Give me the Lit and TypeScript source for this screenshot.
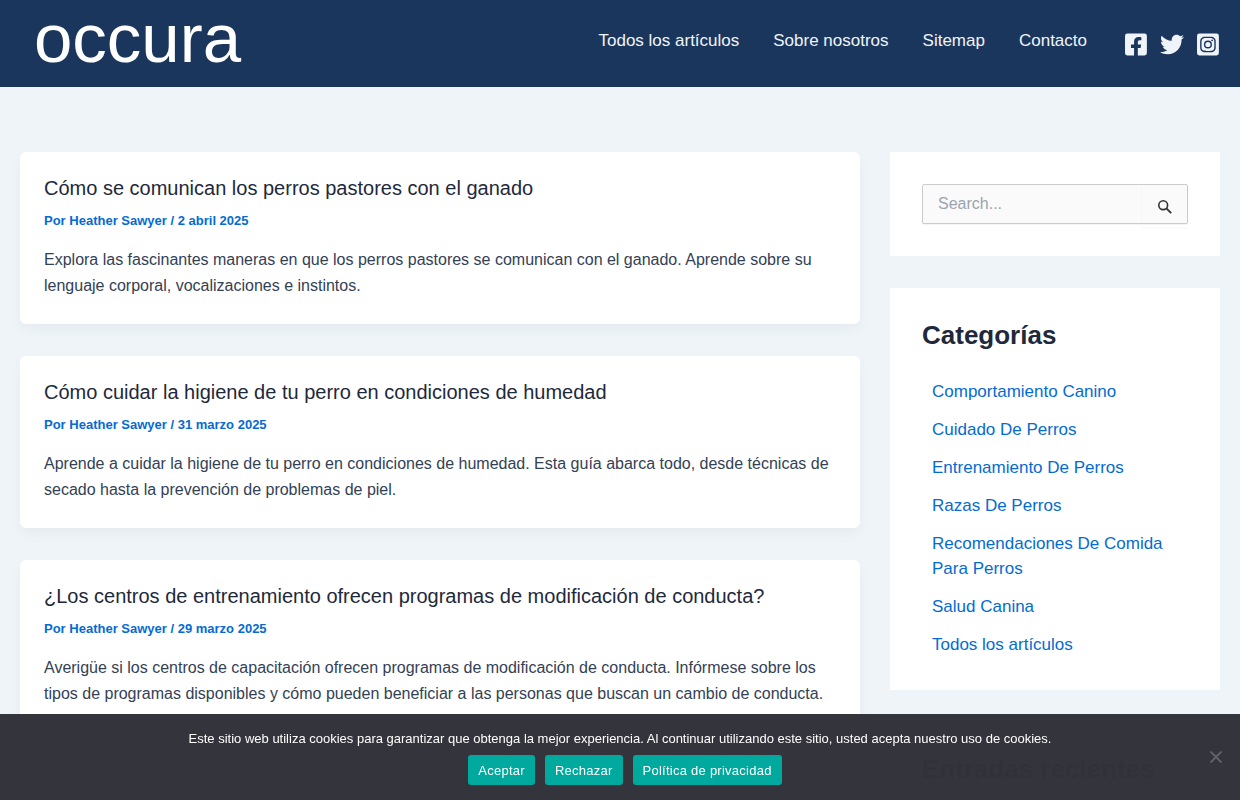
import { LitElement, html, css, svg } from "lit";
import { customElement } from "lit/decorators.js";

interface Post { title: string; date: string; excerpt: string; }

const MENU = ["Todos los artículos", "Sobre nosotros", "Sitemap", "Contacto"];

const POSTS: Post[] = [
  {
    title: "Cómo se comunican los perros pastores con el ganado",
    date: "2 abril 2025",
    excerpt: "Explora las fascinantes maneras en que los perros pastores se comunican con el ganado. Aprende sobre su lenguaje corporal, vocalizaciones e instintos.",
  },
  {
    title: "Cómo cuidar la higiene de tu perro en condiciones de humedad",
    date: "31 marzo 2025",
    excerpt: "Aprende a cuidar la higiene de tu perro en condiciones de humedad. Esta guía abarca todo, desde técnicas de secado hasta la prevención de problemas de piel.",
  },
  {
    title: "¿Los centros de entrenamiento ofrecen programas de modificación de conducta?",
    date: "29 marzo 2025",
    excerpt: "Averigüe si los centros de capacitación ofrecen programas de modificación de conducta. Infórmese sobre los tipos de programas disponibles y cómo pueden beneficiar a las personas que buscan un cambio de conducta.",
  },
];

const CATEGORIES = [
  "Comportamiento Canino",
  "Cuidado De Perros",
  "Entrenamiento De Perros",
  "Razas De Perros",
  "Recomendaciones De Comida Para Perros",
  "Salud Canina",
  "Todos los artículos",
];

const SOCIAL = [
  {
    name: "Facebook",
    box: "0 0 448 512",
    shape: svg`<path d="M400 32H48A48 48 0 0 0 0 80v352a48 48 0 0 0 48 48h137.25V327.69h-63V256h63v-54.64c0-62.15 37-96.48 93.67-96.48 27.14 0 55.52 4.84 55.52 4.84v61h-31.27c-30.81 0-40.42 19.12-40.42 38.73V256h68.78l-11 71.69h-57.78V480H400a48 48 0 0 0 48-48V80a48 48 0 0 0-48-48z"/>`,
  },
  {
    name: "Twitter",
    box: "0 0 512 512",
    shape: svg`<path d="M459.37 151.716c.325 4.548.325 9.097.325 13.645 0 138.72-105.583 298.558-298.558 298.558-59.452 0-114.68-17.219-161.137-47.106 8.447.974 16.568 1.299 25.34 1.299 49.055 0 94.213-16.568 130.274-44.832-46.132-.975-84.792-31.188-98.112-72.772 6.498.974 12.995 1.624 19.818 1.624 9.421 0 18.843-1.3 27.614-3.573-48.081-9.747-84.143-51.98-84.143-102.985v-1.299c13.969 7.797 30.214 12.67 47.431 13.319-28.264-18.843-46.781-51.005-46.781-87.391 0-19.492 5.197-37.36 14.294-52.954 51.655 63.675 129.3 105.258 216.365 109.807-1.624-7.797-2.599-15.918-2.599-24.04 0-57.828 46.782-104.934 104.934-104.934 30.213 0 57.502 12.67 76.67 33.137 23.715-4.548 46.456-13.32 66.599-25.34-7.798 24.366-24.366 44.833-46.132 57.827 21.117-2.273 41.584-8.122 60.426-16.243-14.292 20.791-32.161 39.308-52.628 54.253z"/>`,
  },
  {
    name: "Instagram",
    box: "0 0 448 512",
    shape: svg`<path d="M224 202.66A53.34 53.34 0 1 0 277.36 256 53.38 53.38 0 0 0 224 202.66zm124.71-41a54 54 0 0 0-30.41-30.41c-21-8.29-71-6.43-94.3-6.43s-73.25-1.93-94.31 6.43a54 54 0 0 0-30.41 30.41c-8.28 21-6.43 71.05-6.43 94.33s-1.85 73.27 6.47 94.34a54 54 0 0 0 30.41 30.41c21 8.29 71 6.43 94.31 6.43s73.24 1.93 94.3-6.43a54 54 0 0 0 30.41-30.41c8.35-21 6.43-71.05 6.43-94.33s1.92-73.26-6.43-94.33zM224 338a82 82 0 1 1 82-82 81.9 81.9 0 0 1-82 82zm85.38-148.3a19.14 19.14 0 1 1 19.13-19.14 19.1 19.1 0 0 1-19.09 19.18zM400 32H48A48 48 0 0 0 0 80v352a48 48 0 0 0 48 48h352a48 48 0 0 0 48-48V80a48 48 0 0 0-48-48zm-17.12 290c-1.29 25.63-7.14 48.34-25.85 67s-41.4 24.63-67 25.85c-26.41 1.49-105.59 1.49-132 0-25.63-1.29-48.26-7.15-67-25.85s-24.63-41.42-25.85-67c-1.49-26.42-1.49-105.61 0-132 1.29-25.63 7.07-48.34 25.85-67s41.47-24.56 67-25.78c26.41-1.49 105.59-1.49 132 0 25.63 1.29 48.33 7.15 67 25.85s24.63 41.42 25.85 67.05c1.49 26.32 1.49 105.44 0 131.88z"/>`,
  },
];

@customElement("site-header")
export class SiteHeader extends LitElement {
  static styles = css`
    :host { display: block; background: #1b365d; }
    a { color: #eff4fa; text-decoration: none; }
    .bar { display: flex; justify-content: space-between; align-items: center; padding: 0 20px; }
    .logo { padding: 0 0 9px 14px; color: #fff; font-size: 69px; line-height: 78px; }
    .right { display: flex; align-items: center; gap: 37px; }
    .menu { display: flex; gap: 34px; margin: 0; padding: 0 0 6px; list-style: none; font-size: 17px; line-height: 26px; }
    .social { display: flex; gap: 12px; padding-top: 1px; }
    .social a { display: flex; justify-content: center; width: 24px; }
    .social svg { display: block; height: 25px; max-width: 24px; fill: currentColor; }
  `;
  render() {
    return html`
      <header class="bar">
        <a class="logo" href="#">occura</a>
        <div class="right">
          <nav aria-label="Principal">
            <ul class="menu">${MENU.map((m) => html`<li><a href="#">${m}</a></li>`)}</ul>
          </nav>
          <div class="social">
            ${SOCIAL.map((s) => html`<a href="#" aria-label=${s.name}><svg viewBox=${s.box} aria-hidden="true">${s.shape}</svg></a>`)}
          </div>
        </div>
      </header>`;
  }
}

@customElement("post-list")
export class PostList extends LitElement {
  static styles = css`
    :host { display: flex; flex-direction: column; gap: 32px; }
    a { color: inherit; text-decoration: none; }
    .card { padding: 24px 24px 25px; border-radius: 6px; background: #fff; box-shadow: 0 6px 15px -2px rgba(16, 24, 40, 0.05); }
    .title { margin: 0 0 10px; color: #1e293b; font-size: 20px; font-weight: 400; line-height: 25px; }
    .meta { margin-bottom: 16px; color: #046bd2; font-size: 13px; font-weight: 700; line-height: 20px; }
    .excerpt { margin: 0; font-size: 16px; line-height: 26px; }
  `;
  render() {
    return POSTS.map((p) => html`
      <article class="card">
        <h2 class="title"><a href="#">${p.title}</a></h2>
        <div class="meta">Por <a href="#">Heather Sawyer</a> / ${p.date}</div>
        <p class="excerpt">${p.excerpt}</p>
      </article>`);
  }
}

@customElement("side-bar")
export class SideBar extends LitElement {
  static styles = css`
    :host { display: flex; flex-direction: column; gap: 32px; }
    .widget { padding: 32px; background: #fff; }
    .search { display: flex; box-sizing: border-box; height: 40px; border: 1px solid #ccc; border-radius: 2px; background: #fafafa; box-shadow: 0 1px 1px rgba(0, 0, 0, 0.05); }
    .field { flex: 1; min-width: 0; padding: 0 15px; border: 0; background: transparent; color: #334155; font: 16px/24px "Liberation Sans", Arial, sans-serif; }
    .field::placeholder { color: #9ca3af; opacity: 1; }
    .go { display: grid; place-items: center; width: 45px; height: 42px; padding: 2px 0 0; border: 0; background: transparent; color: #333; box-shadow: 0 1px 2px rgba(0, 0, 0, 0.04); }
    .go svg { display: block; width: 14px; height: 14px; }
    .heading { margin: 0 0 29px; color: #1e293b; font-size: 26px; font-weight: 700; line-height: 30px; }
    .list { display: flex; flex-direction: column; gap: 13px; margin: 0; padding: 0 10px 1px; list-style: none; font-size: 17px; line-height: 25px; }
    .list a { color: #046bd2; text-decoration: none; }
  `;
  render() {
    return html`
      <section class="widget">
        <form class="search" role="search">
          <input class="field" type="search" placeholder="Search..." aria-label="Buscar" />
          <button class="go" type="button" aria-label="Buscar">
            <svg viewBox="0 0 14 14" fill="none" stroke="currentColor" aria-hidden="true">
              <circle cx="5.2" cy="5.2" r="4.4" stroke-width="1.6" />
              <path d="M8.4 8.4L13.2 13.2" stroke-width="1.9" />
            </svg>
          </button>
        </form>
      </section>
      <section class="widget">
        <h2 class="heading">Categorías</h2>
        <ul class="list">${CATEGORIES.map((c) => html`<li><a href="#">${c}</a></li>`)}</ul>
      </section>
      <section class="widget">
        <h2 class="heading">Entradas recientes</h2>
      </section>`;
  }
}

@customElement("cookie-notice")
export class CookieNotice extends LitElement {
  static styles = css`
    :host { position: fixed; right: 0; bottom: 0; left: 0; background: rgba(50, 50, 58, 0.99); color: #fff; }
    .inner { display: flex; flex-direction: column; align-items: center; gap: 6px; padding: 15px 44px; font-size: 13px; line-height: 20px; text-align: center; }
    .text { margin: 0; }
    .actions { display: flex; flex-wrap: wrap; gap: 10px; padding-left: 10px; }
    .action { height: 30px; padding: 2px 10px 0; border: 0; border-radius: 3px; background: #00a99d; color: #fff; font: 13px/20px "Liberation Sans", Arial, sans-serif; letter-spacing: 0.25px; }
    .close { position: absolute; top: 50%; right: 14px; display: block; width: 20px; height: 20px; padding: 4px; border: 0; background: transparent; color: #65656b; transform: translateY(-50%); }
    .close svg { display: block; width: 12px; height: 12px; }
  `;
  render() {
    return html`
      <div class="inner" role="dialog" aria-label="Cookies">
        <p class="text">Este sitio web utiliza cookies para garantizar que obtenga la mejor experiencia. Al continuar utilizando este sitio, usted acepta nuestro uso de cookies.</p>
        <div class="actions">
          <button class="action" type="button">Aceptar</button>
          <button class="action" type="button">Rechazar</button>
          <button class="action" type="button">Política de privacidad</button>
        </div>
      </div>
      <button class="close" type="button" aria-label="Cerrar">
        <svg viewBox="0 0 12 12" stroke="currentColor" stroke-width="1.8" aria-hidden="true"><path d="M0.5 0.5L11.5 11.5M11.5 0.5L0.5 11.5" /></svg>
      </button>`;
  }
}

@customElement("app-root")
export class AppRoot extends LitElement {
  static styles = css`
    :host { display: block; min-height: 100vh; background: #eff4f9; color: #334155; font-family: "Liberation Sans", Arial, sans-serif; }
    .page { display: grid; grid-template-columns: minmax(0, 1fr) 330px; align-items: start; gap: 30px; max-width: 1200px; margin: 0 auto; padding: 65px 20px 64px; }
  `;
  render() {
    return html`
      <site-header></site-header>
      <div class="page">
        <post-list role="main"></post-list>
        <side-bar role="complementary"></side-bar>
      </div>
      <cookie-notice></cookie-notice>`;
  }
}
